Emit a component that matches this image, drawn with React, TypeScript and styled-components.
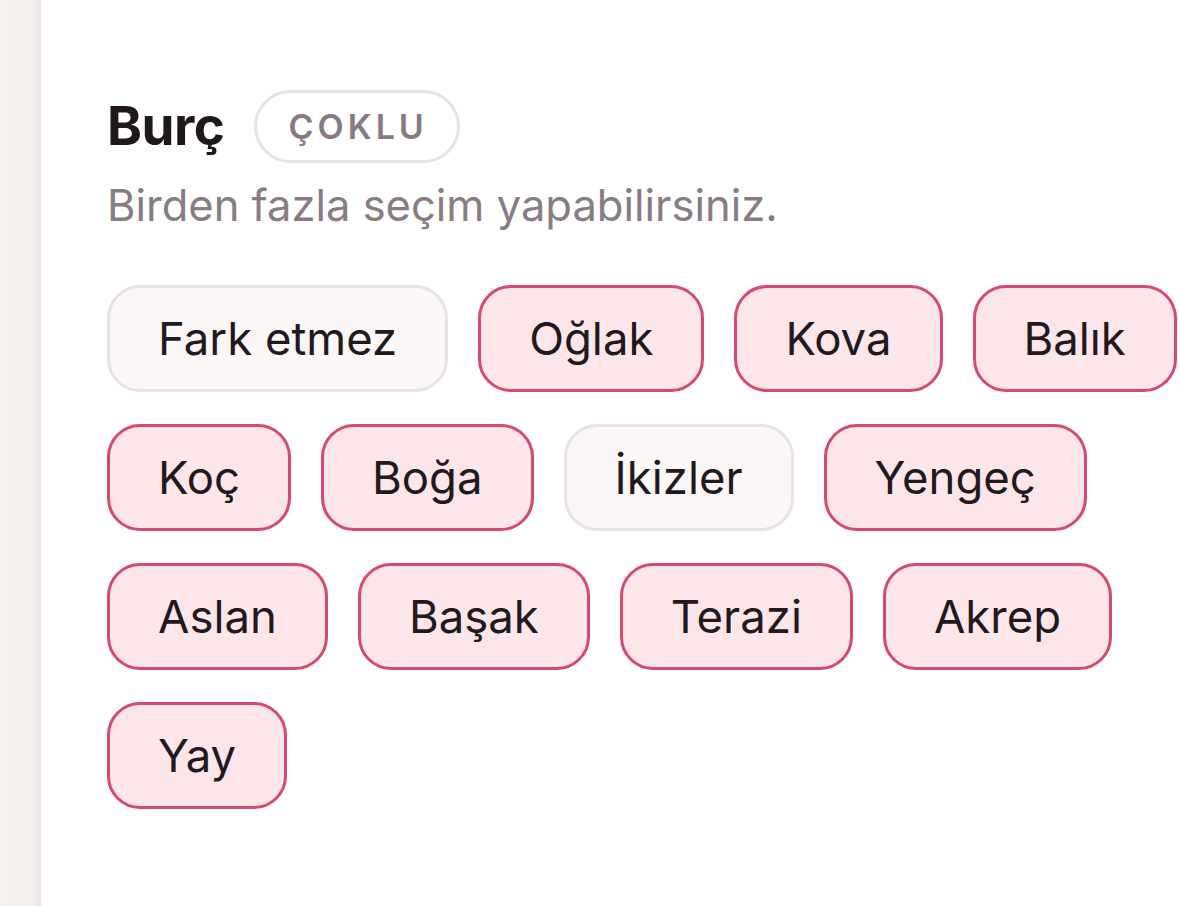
import styled, { createGlobalStyle } from "styled-components";

const GlobalStyle = createGlobalStyle`
  html, body {
    margin: 0;
    padding: 0;
    background: #ffffff;
    overflow: hidden;
  }
  body {
    font-family: "Inter", "Noto Sans", "Liberation Sans", sans-serif;
    color: #1f181c;
  }
`;

type Sign = { label: string; selected: boolean };

const signs: Sign[] = [
  { label: "Fark etmez", selected: false },
  { label: "Oğlak", selected: true },
  { label: "Kova", selected: true },
  { label: "Balık", selected: true },
  { label: "Koç", selected: true },
  { label: "Boğa", selected: true },
  { label: "İkizler", selected: false },
  { label: "Yengeç", selected: true },
  { label: "Aslan", selected: true },
  { label: "Başak", selected: true },
  { label: "Terazi", selected: true },
  { label: "Akrep", selected: true },
  { label: "Yay", selected: true },
];

const App = () => {
  return (
    <>
      <GlobalStyle />
      <Page>
        <SideEdge />
        <Section>
          <TitleRow>
            <Title>Burç</Title>
            <Badge>ÇOKLU</Badge>
          </TitleRow>
          <Hint>Birden fazla seçim yapabilirsiniz.</Hint>
          <ChipList>
            {signs.map((s) => (
              <Chip key={s.label} $selected={s.selected} type="button">
                {s.label}
              </Chip>
            ))}
          </ChipList>
        </Section>
      </Page>
    </>
  );
};

export default App;

const Page = styled.div`
  display: flex;
  width: 100vw;
  height: 100vh;
`;

const SideEdge = styled.div`
  flex: 0 0 41px;
  background: linear-gradient(
    to right,
    #f4f1ef 0%,
    #f2eeec 80%,
    #e9e3e3 100%
  );
`;

const Section = styled.main`
  flex: 1;
  padding: 90px 0 0 66px;
  min-width: 0;
`;

const TitleRow = styled.div`
  display: flex;
  align-items: center;
  gap: 29px;
`;

const Title = styled.h2`
  margin: 0;
  font-size: 53px;
  font-weight: 700;
  letter-spacing: -0.5px;
  color: #1e171b;
  line-height: 1;
`;

const Badge = styled.span`
  display: inline-flex;
  align-items: center;
  justify-content: center;
  box-sizing: border-box;
  height: 73px;
  padding: 0 29px 0 32px;
  border: 3px solid #e9e1e3;
  border-radius: 40px;
  font-size: 34px;
  font-weight: 600;
  letter-spacing: 4px;
  color: #857b81;
`;

const Hint = styled.p`
  margin: 16px 0 0;
  font-size: 43.5px;
  line-height: 1.2;
  color: #877c82;
`;

const ChipList = styled.div`
  display: flex;
  flex-wrap: wrap;
  gap: 32px 30px;
  width: 1110px;
  margin-top: 54px;
`;

const Chip = styled.button<{ $selected: boolean }>`
  box-sizing: border-box;
  height: 107px;
  padding: 0 48px;
  border-radius: 33px;
  border: 3px solid ${({ $selected }) => ($selected ? "#d64a6e" : "#e9e1e3")};
  background: ${({ $selected }) => ($selected ? "#fce6ea" : "#fbf7f7")};
  font-family: inherit;
  font-size: 45.5px;
  font-weight: 400;
  color: #21191d;
  cursor: pointer;
  display: inline-flex;
  align-items: center;
  justify-content: center;
`;
